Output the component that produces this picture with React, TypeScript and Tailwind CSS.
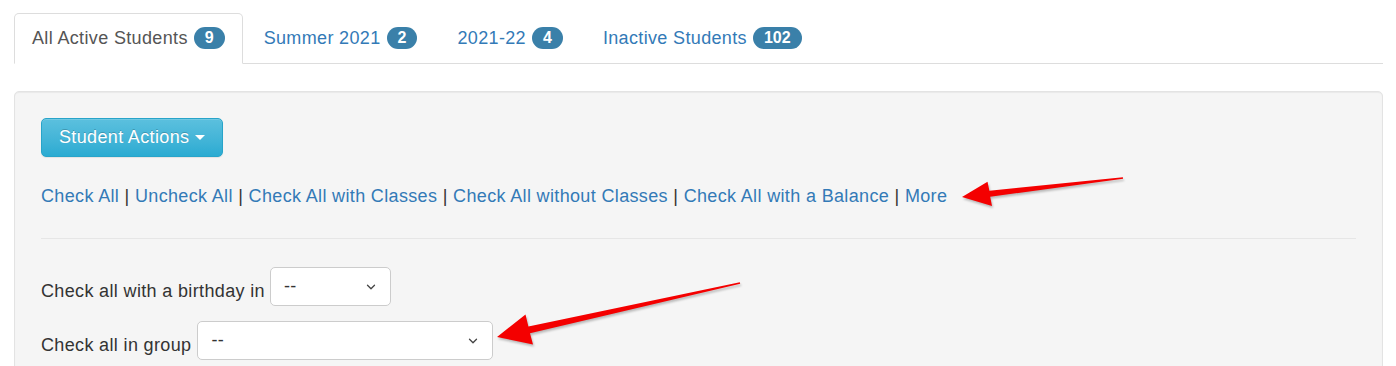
import { ChevronDown } from 'lucide-react'

const tabs = [
  { label: 'All Active Students', count: 9, active: true },
  { label: 'Summer 2021', count: 2 },
  { label: '2021-22', count: 4 },
  { label: 'Inactive Students', count: 102 },
]

const links = [
  'Check All',
  'Uncheck All',
  'Check All with Classes',
  'Check All without Classes',
  'Check All with a Balance',
  'More',
]

function Badge({ n }: { n: number }) {
  return (
    <span className="ml-[6px] inline-block rounded-[12px] bg-[#3a80a9] px-[11px] py-[2px] align-[1px] text-[16px] font-bold leading-[18px] tracking-normal text-white">
      {n}
    </span>
  )
}

function FakeSelect({ width }: { width: string }) {
  return (
    <div
      className={`${width} flex h-[39px] items-center justify-between rounded-[5px] border border-[#ccc] bg-white pl-[13px] pr-[12px] text-[#333]`}
    >
      <span>--</span>
      <ChevronDown size={14} strokeWidth={2.25} className="text-[#444]" />
    </div>
  )
}

export default function App() {
  return (
    <div className="relative h-[366px] overflow-hidden bg-white font-['Liberation_Sans',Arial,sans-serif] text-[18px] leading-[25px] tracking-[0.35px] text-[#333]">
      <div className="px-[14px] pr-[13px] pt-[13px]">
        {/* tabs */}
        <ul className="flex border-b border-[#ddd]">
          {tabs.map(t => (
            <li key={t.label} className="-mb-px mr-[2px]">
              <span
                className={
                  t.active
                    ? 'block rounded-t-[5px] border border-[#ddd] border-b-transparent bg-white px-[17px] py-[12px] text-[#555]'
                    : 'block rounded-t-[5px] border border-transparent px-[18px] py-[12px] text-[#337ab7]'
                }
              >
                {t.label}
                <Badge n={t.count} />
              </span>
            </li>
          ))}
        </ul>

        {/* well */}
        <div className="mt-[27px] h-[400px] rounded-[5px] border border-[#e3e3e3] bg-[#f5f5f5] px-[26px] pt-[26px] shadow-[inset_0_1px_1px_rgba(0,0,0,0.05)]">
          <button className="flex h-[39px] items-center rounded-[5px] border border-[#28a4c9] bg-gradient-to-b from-[#5bc0de] to-[#2aabd2] px-[17px] text-white shadow-[inset_0_1px_0_rgba(255,255,255,0.15),0_1px_1px_rgba(0,0,0,0.075)] [text-shadow:0_-1px_0_rgba(0,0,0,0.2)]">
            Student Actions
            <span className="ml-[6px] inline-block h-0 w-0 border-x-[5px] border-t-[5px] border-x-transparent border-t-white" />
          </button>

          <p className="mt-[27px]">
            {links.map((l, i) => (
              <span key={l}>
                {i > 0 && <span> | </span>}
                <a className="text-[#337ab7]">{l}</a>
              </span>
            ))}
          </p>

          <hr className="mt-[29px] border-t border-[#e6e6e6]" />

          <div className="mt-[28px] flex items-center">
            <span className="mt-[10px]">Check all with a birthday in</span>
            <div className="ml-[5px]">
              <FakeSelect width="w-[121px]" />
            </div>
          </div>
          <div className="mt-[15px] flex items-center">
            <span className="mt-[10px]">Check all in group</span>
            <div className="ml-[6px]">
              <FakeSelect width="w-[296px]" />
            </div>
          </div>
        </div>
      </div>

      {/* annotation arrows */}
      <svg
        className="pointer-events-none absolute left-0 top-0 drop-shadow-[1px_2px_1px_rgba(0,0,0,0.25)]"
        width="1396"
        height="366"
      >
        <polygon
          fill="#f40000"
          points="962,197 992,206 990.2,196.7 1123.1,178.7 1122.9,177.3 989.4,190.7 987.5,181.8"
        />
        <polygon
          fill="#f40000"
          points="497,337 533,344.5 530,333.2 740.2,283.8 739.8,282.2 528.4,326.4 525.5,314.5"
        />
      </svg>
    </div>
  )
}
